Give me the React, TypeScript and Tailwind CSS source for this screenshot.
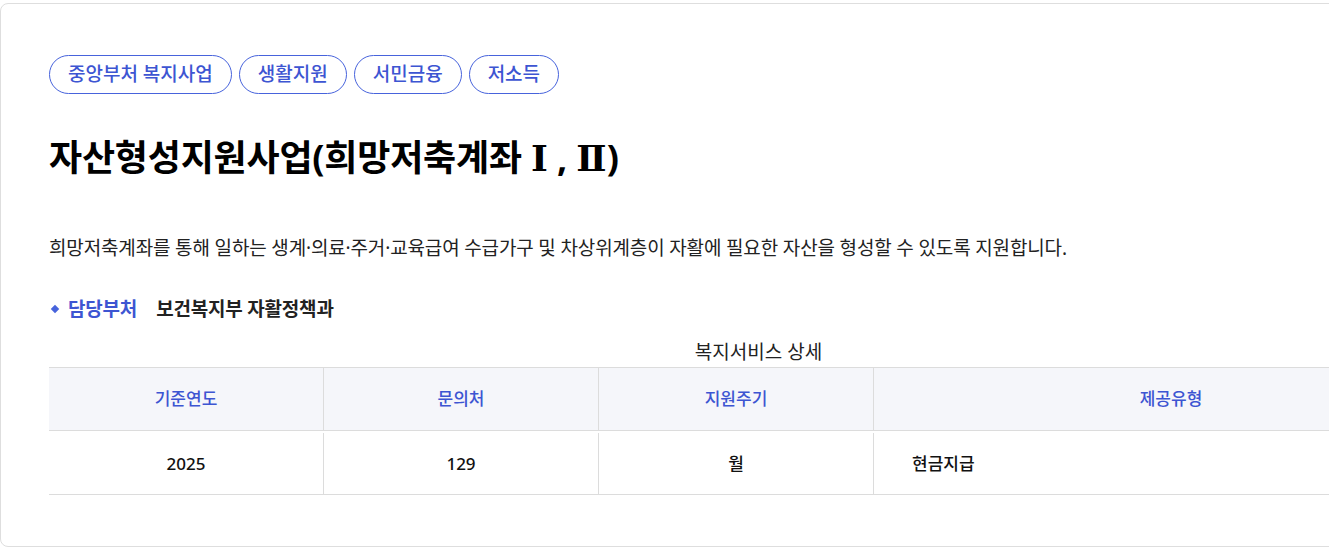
const tags = ["중앙부처 복지사업", "생활지원", "서민금융", "저소득"];

const cols = [
  { head: "기준연도", value: "2025", w: "w-[275px]", center: true },
  { head: "문의처", value: "129", w: "w-[275px]", center: true },
  { head: "지원주기", value: "월", w: "w-[275px]", center: true },
  { head: "제공유형", value: "현금지급", w: "flex-1", center: false },
];

export default function App() {
  return (
    <div className="w-[1329px] h-[549px] overflow-hidden bg-white font-['Noto_Sans','Noto_Sans_CJK_KR',sans-serif] text-[#111]">
      <div className="mt-[3px] w-[1517px] rounded-lg border border-[#dedede] bg-white px-[48px] pt-[51px] pb-[51px]">
        {/* Tags */}
        <div className="flex gap-[7px]">
          {tags.map((t) => (
            <span
              key={t}
              className="h-[39px] rounded-full border border-[#4763dc] px-[18px] flex items-center text-[19px] font-medium text-[#3d55d2]"
            >
              {t}
            </span>
          ))}
        </div>

        {/* Title */}
        <h1 className="mt-[39px] text-[36px] font-bold leading-[50px] tracking-[-0.2px] text-black">
          자산형성지원사업(희망저축계좌{" "}
          <span className="font-['DejaVu_Serif',serif] tracking-normal">Ⅰ</span>
          {" "}, <span className="font-['DejaVu_Serif',serif] tracking-normal">Ⅱ</span>)
        </h1>

        {/* Description */}
        <p className="mt-[51px] text-[19px] leading-[28px] tracking-[-0.15px] text-[#222]">
          희망저축계좌를 통해 일하는 생계·의료·주거·교육급여 수급가구 및 차상위계층이 자활에 필요한 자산을 형성할 수 있도록 지원합니다.
        </p>

        {/* Department */}
        <div className="mt-[33px] flex items-center text-[19px] leading-[28px] tracking-[-0.2px]">
          <span className="ml-[3px] mr-[10px] h-[6px] w-[6px] rotate-45 bg-[#4763dc]" />
          <span className="font-semibold text-[#3d55d2]">담당부처</span>
          <span className="ml-[19px] font-semibold text-[#222]">보건복지부 자활정책과</span>
        </div>

        {/* Table */}
        <div className="mt-[17px]">
          <div className="text-center text-[19px] leading-[24px] text-[#222]">복지서비스 상세</div>
          <div className="mt-[3px] border-t border-b border-[#dcdcdc]">
            <div className="flex h-[63px] bg-[#f5f6fa] border-b border-[#dcdcdc]">
              {cols.map((c, i) => (
                <div
                  key={c.head}
                  className={`${c.w} ${i < cols.length - 1 ? "border-r border-[#dcdcdc]" : ""} flex items-center justify-center text-[17px] font-medium text-[#3d55d2]`}
                >
                  {c.head}
                </div>
              ))}
            </div>
            <div className="flex h-[63px]">
              {cols.map((c, i) => (
                <div
                  key={c.head}
                  className={`${c.w} ${i < cols.length - 1 ? "border-r border-[#dcdcdc]" : ""} mt-[2px] flex items-center ${c.center ? "justify-center" : "pl-[38px]"} text-[17px] font-medium text-[#111]`}
                >
                  {c.value}
                </div>
              ))}
            </div>
          </div>
        </div>
      </div>
    </div>
  );
}
